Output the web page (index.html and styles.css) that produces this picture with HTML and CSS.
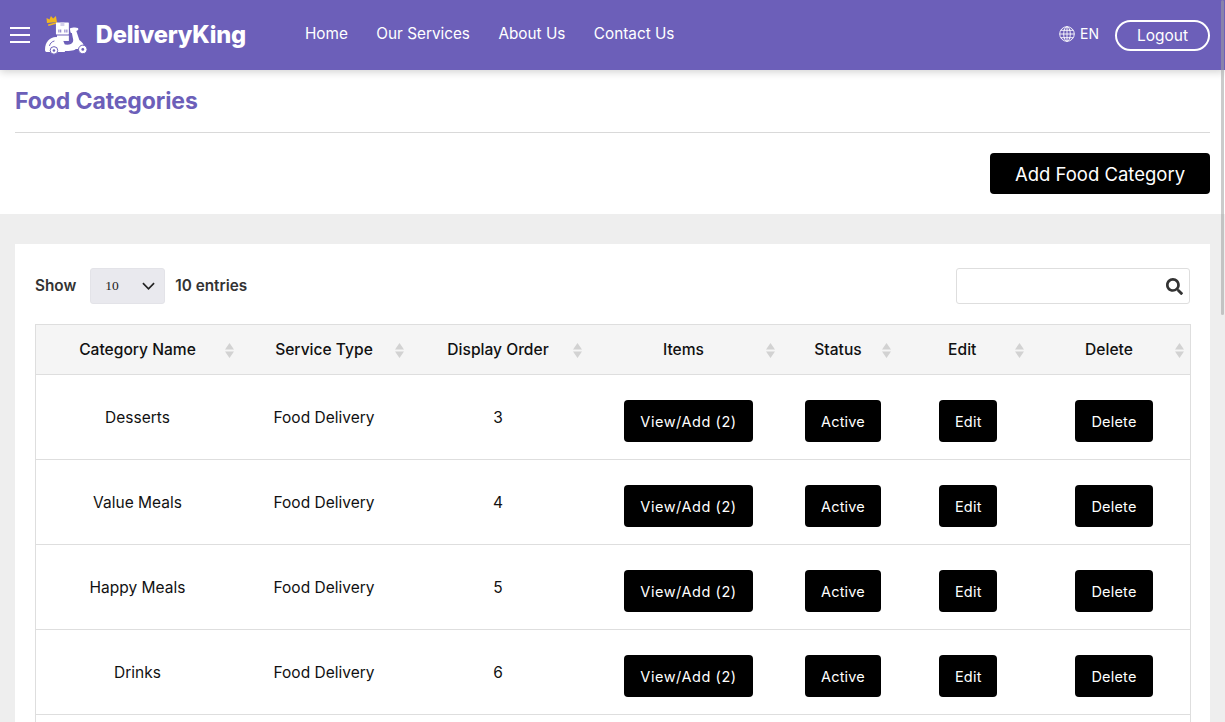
FILE: index.html
```html
<!DOCTYPE html>
<html lang="en">
<head>
<meta charset="utf-8">
<title>Food Categories</title>
<link rel="stylesheet" href="styles.css">
</head>
<body>
<header class="topbar">
  <button class="burger" aria-label="Menu"><span></span><span></span><span></span></button>
  <a class="brand" href="#">
    <svg class="brand-icon" viewBox="0 0 43 40" width="43" height="40">
      <path d="M2 8L1.500 3l3 1.500L6 1l2.200 2.500L11 1l1 6z" fill="#f2b71f"/>
      <path d="M3 9.500l9-2.500.5 1.500-9 2.500z" fill="#f2b71f"/>
      <rect x="11" y="7.500" width="13" height="12" rx=".5" fill="#fff"/>
      <path d="M15.500 7.500h4v3.500h-4z" fill="#d4d0ea"/>
      <path d="M14 14.500v3M15.800 14.500v3M20 14.500v3M22 14.500v3" stroke="#6c5fb9" stroke-width=".9"/>
      <path d="M12 20.500h12v5.500H12z" fill="#fff"/>
      <path d="M0 34.500C0 27 5 22 11 22c5 0 9 4 9 10v5H1.500C.5 37 0 36 0 34.500z" fill="#fff"/>
      <path d="M4.500 31c.5-2.500 2.500-4.500 5-5" stroke="#6c5fb9" stroke-width="1" fill="none"/>
      <path d="M18 38V29c3 1 6 1 8 0 2-1 3-3 2-6l-1-5c-1 0-1.500-.5-1.500-1.500l-.5-3c2-1 6-1.500 8-.5 1 1 .5 2-.5 2.500l-1 .5 3 9c3 2 5 5 5 8l-1 1H31c-2 2-8 2-13 2z" fill="#fff"/>
      <circle cx="9" cy="35.500" r="3.800" fill="#fff" stroke="#6c5fb9" stroke-width="1"/>
      <circle cx="9" cy="35.500" r="1.300" fill="#6c5fb9"/>
      <circle cx="38" cy="34.500" r="4.300" fill="#fff" stroke="#6c5fb9" stroke-width="1"/>
      <circle cx="38" cy="34.500" r="1.400" fill="#6c5fb9"/>
    </svg>
    <span class="brand-name">DeliveryKing</span>
  </a>
  <nav class="mainnav">
    <a href="#">Home</a>
    <a href="#">Our Services</a>
    <a href="#">About Us</a>
    <a href="#">Contact Us</a>
  </nav>
  <div class="top-actions">
    <span class="lang">
      <svg viewBox="0 0 16 16" width="16" height="16" fill="none" stroke="#fff" stroke-width=".9">
        <circle cx="8" cy="8" r="7.300"/>
        <ellipse cx="8" cy="8" rx="3.300" ry="7.300"/>
        <path d="M8 .7v14.600M.7 8h14.600M1.700 4.300h12.600M1.700 11.700h12.600"/>
      </svg>
      EN
    </span>
    <button class="logout">Logout</button>
  </div>
</header>

<section class="page-head">
  <h1>Food Categories</h1>
  <div class="head-actions"><button class="add-btn">Add Food Category</button></div>
</section>

<main class="content">
  <div class="card">
    <div class="controls">
      <div class="length">
        <span class="lbl">Show</span>
        <div class="select">
          <span>10</span>
          <svg viewBox="0 0 14 8" width="13" height="8" fill="none" stroke="#222" stroke-width="1.800"><path d="M1 1l6 6 6-6"/></svg>
        </div>
        <span class="lbl">10 entries</span>
      </div>
      <div class="search">
        <svg viewBox="0 0 512 512" width="17" height="17"><path fill="#333" d="M505 442.700L405.300 343c-4.500-4.500-10.600-7-17-7H372c27.600-35.300 44-79.700 44-128C416 93.100 322.900 0 208 0S0 93.100 0 208s93.100 208 208 208c48.300 0 92.700-16.400 128-44v16.300c0 6.400 2.500 12.500 7 17l99.700 99.700c9.400 9.400 24.600 9.400 33.900 0l28.300-28.300c9.400-9.400 9.400-24.600.1-34zM208 336c-70.700 0-128-57.200-128-128 0-70.700 57.200-128 128-128 70.700 0 128 57.200 128 128 0 70.700-57.200 128-128 128z"/></svg>
      </div>
    </div>
    <table class="grid">
      <colgroup>
        <col class="c1"><col class="c2"><col class="c3"><col class="c4"><col class="c5"><col class="c6"><col class="c7">
      </colgroup>
      <thead>
        <tr>
          <th>Category Name<svg class="sort" viewBox="0 0 9 15" width="9" height="15"><path d="M4.500 0L9 6.500H0zM4.500 15L0 8.500h9z" fill="#d2d2d2"/></svg></th>
          <th>Service Type<svg class="sort" viewBox="0 0 9 15" width="9" height="15"><path d="M4.500 0L9 6.500H0zM4.500 15L0 8.500h9z" fill="#d2d2d2"/></svg></th>
          <th>Display Order<svg class="sort" viewBox="0 0 9 15" width="9" height="15"><path d="M4.500 0L9 6.500H0zM4.500 15L0 8.500h9z" fill="#d2d2d2"/></svg></th>
          <th>Items<svg class="sort" viewBox="0 0 9 15" width="9" height="15"><path d="M4.500 0L9 6.500H0zM4.500 15L0 8.500h9z" fill="#d2d2d2"/></svg></th>
          <th>Status<svg class="sort" viewBox="0 0 9 15" width="9" height="15"><path d="M4.500 0L9 6.500H0zM4.500 15L0 8.500h9z" fill="#d2d2d2"/></svg></th>
          <th>Edit<svg class="sort" viewBox="0 0 9 15" width="9" height="15"><path d="M4.500 0L9 6.500H0zM4.500 15L0 8.500h9z" fill="#d2d2d2"/></svg></th>
          <th>Delete<svg class="sort sort-last" viewBox="0 0 9 15" width="9" height="15"><path d="M4.500 0L9 6.500H0zM4.500 15L0 8.500h9z" fill="#d2d2d2"/></svg></th>
        </tr>
      </thead>
      <tbody>
        <tr>
          <td>Desserts</td><td>Food Delivery</td><td>3</td>
          <td><button class="act act-view">View/Add (2)</button></td>
          <td><button class="act act-status">Active</button></td>
          <td><button class="act act-edit">Edit</button></td>
          <td><button class="act act-del">Delete</button></td>
        </tr>
        <tr>
          <td>Value Meals</td><td>Food Delivery</td><td>4</td>
          <td><button class="act act-view">View/Add (2)</button></td>
          <td><button class="act act-status">Active</button></td>
          <td><button class="act act-edit">Edit</button></td>
          <td><button class="act act-del">Delete</button></td>
        </tr>
        <tr>
          <td>Happy Meals</td><td>Food Delivery</td><td>5</td>
          <td><button class="act act-view">View/Add (2)</button></td>
          <td><button class="act act-status">Active</button></td>
          <td><button class="act act-edit">Edit</button></td>
          <td><button class="act act-del">Delete</button></td>
        </tr>
        <tr>
          <td>Drinks</td><td>Food Delivery</td><td>6</td>
          <td><button class="act act-view">View/Add (2)</button></td>
          <td><button class="act act-status">Active</button></td>
          <td><button class="act act-edit">Edit</button></td>
          <td><button class="act act-del">Delete</button></td>
        </tr>
        <tr>
          <td></td><td></td><td></td><td></td><td></td><td></td><td></td>
        </tr>
      </tbody>
    </table>
  </div>
</main>
<div class="scrollthumb"></div>
</body>
</html>
```
FILE: styles.css
```css
* { box-sizing: border-box; }
html, body { height: 100%; }
body {
  margin: 0;
  height: 722px;
  overflow: hidden;
  background: #eeeeee;
  font-family: Inter, "Noto Sans", sans-serif;
  color: #111;
}
button { font-family: inherit; cursor: pointer; }

.topbar {
  position: relative;
  z-index: 2;
  height: 70px;
  display: flex;
  align-items: center;
  padding: 0 15px 0 10px;
  background: #6c5fb9;
  box-shadow: 0 2px 8px rgba(0, 0, 0, .18);
}
.burger {
  width: 20px;
  height: 16px;
  padding: 0;
  border: 0;
  background: none;
  display: flex;
  flex-direction: column;
  justify-content: space-between;
}
.burger span { display: block; height: 2px; background: #fff; }
.brand {
  margin-left: 15px;
  display: flex;
  align-items: center;
  gap: 8px;
  width: 201px;
  text-decoration: none;
  color: #fff;
}
.brand-icon { margin-top: -1px; }
.brand-name { font-size: 23.700px; font-weight: 800; letter-spacing: -.2px; padding-bottom: 2px; white-space: nowrap; }
.mainnav { margin-left: 59px; display: flex; gap: 28.500px; padding-bottom: 3px; }
.mainnav a { color: #fff; text-decoration: none; font-size: 15.300px; font-weight: 400; white-space: nowrap; }
.top-actions { margin-left: auto; display: flex; align-items: center; gap: 16px; }
.lang { display: flex; align-items: center; gap: 5px; color: #fff; font-size: 14px; padding-bottom: 3px; }
.logout {
  width: 95px;
  height: 31px;
  border: 2px solid #fff;
  border-radius: 16px;
  background: none;
  color: #fff;
  font-size: 15.500px;
  padding: 0;
}

.page-head { background: #fff; padding: 0 15px 20px; height: 144px; }
.page-head h1 {
  margin: 0;
  height: 63px;
  padding-top: 18px;
  font-size: 23px;
  line-height: 27px;
  font-weight: 700;
  letter-spacing: -.1px;
  color: #6c5fb9;
  border-bottom: 1px solid #d9d9d9;
}
.head-actions { display: flex; justify-content: flex-end; margin-top: 20px; }
.add-btn {
  width: 220px;
  height: 41px;
  border: 0;
  border-radius: 4px;
  background: #000;
  color: #fff;
  font-size: 18.500px;
  font-weight: 400;
  padding: 0;
}

.content { padding: 30px 15px 0; }
.card { background: #fff; padding: 24px 20px 0; }
.controls { display: flex; justify-content: space-between; align-items: center; height: 36px; margin-bottom: 20px; }
.length { display: flex; align-items: center; gap: 10px; margin-top: -1px; }
.lbl { font-size: 15.300px; font-weight: 600; color: #333; }
.lbl:first-child { margin-right: 4px; }
.select {
  width: 75px;
  height: 36px;
  background: #e9e9ee;
  border: 1px solid #e3e3e8;
  border-radius: 3px;
  padding: 0 9px 0 14px;
  display: flex;
  align-items: center;
  justify-content: space-between;
  font-family: "Liberation Serif", serif;
  font-size: 13.500px;
  color: #222;
}
.search {
  width: 234px;
  height: 36px;
  border: 1px solid #dedede;
  border-radius: 3px;
  display: flex;
  align-items: center;
  justify-content: flex-end;
  padding-right: 6px;
}

.grid { width: 1154.500px; table-layout: fixed; border-collapse: collapse; border: 1px solid #dedede; }
.c1 { width: 203.500px; }
.c2 { width: 170px; }
.c3 { width: 178px; }
.c4 { width: 193px; }
.c5 { width: 116px; }
.c6 { width: 132.500px; }
.c7 { width: 161.500px; }
.grid th {
  position: relative;
  height: 50px;
  background: #f5f5f5;
  border-bottom: 1px solid #dedede;
  font-size: 15.600px;
  font-weight: 500;
  color: #111;
  text-align: center;
  padding: 0;
}
.sort { position: absolute; right: 5px; top: 18px; }
.sort-last { right: 6px; }
.grid td {
  height: 85px;
  border-bottom: 1px solid #dedede;
  font-size: 15.500px;
  text-align: center;
  padding: 0;
  color: #111;
}
.act {
  display: block;
  height: 42px;
  margin: 8px auto 0;
  position: relative;
  left: 5px;
  border: 0;
  border-radius: 4px;
  background: #000;
  color: #fff;
  font-size: 14.500px;
  letter-spacing: .2px;
  padding: 0;
}
.act-view { width: 129px; letter-spacing: .55px; }
.act-status { width: 76px; }
.act-edit { width: 58px; left: 6px; }
.act-del { width: 78px; }

.scrollthumb {
  position: absolute;
  top: 0;
  right: 1px;
  width: 3px;
  height: 315px;
  border-radius: 2px;
  background: rgba(160, 160, 160, .55);
  z-index: 3;
}
```
